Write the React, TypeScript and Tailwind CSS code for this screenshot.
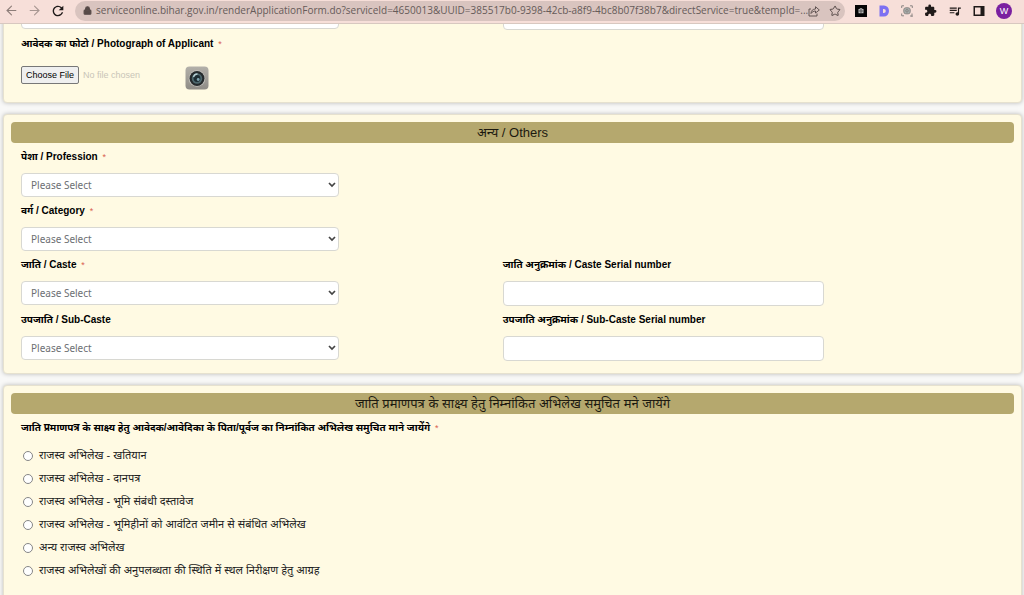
import { useState } from "react";
import type { ReactNode } from "react";
import { ArrowLeft, ArrowRight, Lock, Star } from "lucide-react";
import { MdExtension, MdQueueMusic, MdRefresh } from "react-icons/md";

const EVIDENCE = [
  "राजस्व अभिलेख - खतियान",
  "राजस्व अभिलेख - दानपत्र",
  "राजस्व अभिलेख - भूमि संबंधी दस्तावेज",
  "राजस्व अभिलेख - भूमिहीनों को आवंटित जमीन से संबंधित अभिलेख",
  "अन्य राजस्व अभिलेख",
  "राजस्व अभिलेखों की अनुपलब्धता की स्थिति में स्थल निरीक्षण हेतु आग्रह",
];

const labelClass =
  "block pt-[5px] pb-[7px] text-[10px] leading-[18px] font-bold text-black";
const boxClass =
  "block rounded-sm border border-[#d8d8d2] bg-white text-[#6c6f73]";

function Required() {
  return <span className="ml-[2px] text-[9px] leading-none font-normal text-[#d9604f]">*</span>;
}

function Panel({ title, children }: { title: string; children: ReactNode }) {
  return (
    <section className="rounded-sm border border-[#e6e1cf] bg-[#fffae3] px-[7px] pt-[7px] pb-3 shadow-[0_0_4px_rgba(0,0,0,0.25)]">
      <h2 className="rounded-sm bg-[#b5a86e] text-center text-[13px] leading-[21px] text-[#1c1a10]">
        {title}
      </h2>
      <div className="px-[10px]">{children}</div>
    </section>
  );
}

function Row({ children }: { children: ReactNode }) {
  return <div className="grid grid-cols-[49%_51%]">{children}</div>;
}

function SelectField({
  id,
  label,
  required,
}: {
  id: string;
  label: string;
  required?: boolean;
}) {
  return (
    <div>
      <label htmlFor={id} className={labelClass}>
        {label} {required && <Required />}
      </label>
      <div className="relative w-[66%]">
        <select
          id={id}
          className={`${boxClass} h-6 w-full appearance-none pr-5 pl-[9px] font-['Noto_Sans',sans-serif] text-[10px]`}
        >
          <option>Please Select</option>
        </select>
        <svg
          viewBox="0 0 8 6"
          className="pointer-events-none absolute top-[9px] right-[3px] h-[6px] w-2"
          fill="none"
          stroke="#444"
          strokeWidth="1.7"
        >
          <path d="M1 1l3 3 3-3" />
        </svg>
      </div>
    </div>
  );
}

function TextField({ id, label }: { id: string; label: string }) {
  return (
    <div>
      <label htmlFor={id} className={labelClass}>
        {label}
      </label>
      <input id={id} type="text" className={`${boxClass} h-[25px] w-[64%] px-2 text-[10px]`} />
    </div>
  );
}

function CameraIcon() {
  return (
    <svg viewBox="0 0 24 24" className="size-6">
      <defs>
        <linearGradient id="body" x1="0" y1="0" x2="0" y2="1">
          <stop offset="0" stopColor="#b3b0aa" />
          <stop offset="1" stopColor="#8f8c86" />
        </linearGradient>
      </defs>
      <rect x="0.5" y="0.5" width="23" height="23" rx="4" fill="url(#body)" />
      <circle cx="12" cy="12.5" r="8.3" fill="#c4c3be" />
      <circle cx="12" cy="12.5" r="7.5" fill="#252a2c" />
      <circle cx="12" cy="12.5" r="5.2" fill="#4d676d" />
      <circle cx="12" cy="12.5" r="3.4" fill="#1d2d33" />
      <path d="M8.5 11a4 4 0 0 1 4-3" fill="none" stroke="#b5ced2" strokeWidth="1.3" />
      <circle cx="13.2" cy="13.5" r="1.4" fill="#7fa5b0" />
    </svg>
  );
}

function BrowserBar() {
  const [url, setUrl] = useState(
    "serviceonline.bihar.gov.in/renderApplicationForm.do?serviceId=4650013&UUID=385517b0-9398-42cb-a8f9-4bc8b07f38b7&directService=true&tempId=...",
  );

  return (
    <header className="sticky top-0 z-10 flex h-6 items-center border-b border-[#d8c8c0] bg-[#f7dfd9] pr-3 pb-[2px] pl-1 text-[#1f1a19]">
      <nav className="flex w-[71px] shrink-0 items-center gap-2">
        <button aria-label="Back" className="text-[#8d7d79]">
          <ArrowLeft className="size-[15px]" strokeWidth={1.7} />
        </button>
        <button aria-label="Forward" className="text-[#a89792]">
          <ArrowRight className="size-[15px]" strokeWidth={1.7} />
        </button>
        <button aria-label="Reload">
          <MdRefresh className="size-4" />
        </button>
      </nav>
      <div className="flex h-5 min-w-0 flex-1 items-center rounded-full bg-[#d9c4bf] pr-1 pl-2 text-[#564a48]">
        <Lock className="mr-1 size-[9px] shrink-0" fill="currentColor" strokeWidth={3} />
        <input
          aria-label="Address"
          value={url}
          onChange={(e) => setUrl(e.target.value)}
          className="min-w-0 flex-1 bg-transparent font-['Open_Sans',sans-serif] text-[10px] text-[#665b59] outline-none"
        />
        <div className="flex shrink-0 items-center gap-[9px]">
          <button aria-label="Share">
            <svg viewBox="0 0 12 12" className="size-3" fill="none" stroke="currentColor" strokeWidth="0.9">
              <path d="M3 4H1v7h8V8.5M3 8.5c0-3 2-4.5 4.500-4.500V1.700L11.300 5 7.500 8V6C5.500 6 4 7 3 8.500z" />
            </svg>
          </button>
          <button aria-label="Bookmark">
            <Star className="size-3" />
          </button>
        </div>
      </div>
      <div className="ml-[10px] flex shrink-0 items-center gap-[11px]">
        <button aria-label="Camera extension">
          <svg viewBox="0 0 12 12" className="size-3">
            <path d="M0 0h12v12H0z" fill="#050505" />
            <path d="M3.500 4h1l.5-.7h2l.5.7h1v4.200h-5z" fill="#b9b9b9" />
            <circle cx="6" cy="6" r="1.200" fill="none" stroke="#222" strokeWidth=".7" />
          </svg>
        </button>
        <button aria-label="D extension">
          <svg viewBox="0 0 12 12" className="size-3">
            <path
              d="M1.500 .5h4.500a5 5.500 0 0 1 0 11H1.500zM5 4v4h.8a2 2 0 0 0 0-4z"
              fill="#7d71f2"
              fillRule="evenodd"
            />
          </svg>
        </button>
        <button aria-label="Screenshot extension">
          <svg viewBox="0 0 12 12" className="size-3" fill="none" stroke="#8b8583">
            <path d="M.7 3V.8H3M9 .8h2.300V3M.7 8.500v2.300H3M9 11h2.500M11 8.500V12" />
            <rect x="2.800" y="2.800" width="6.400" height="6" rx="2" fill="#a8b0ae" />
            <circle cx="6" cy="5.800" r="1.300" />
          </svg>
        </button>
        <button aria-label="Extensions">
          <MdExtension className="size-[13px]" />
        </button>
        <button aria-label="Media">
          <MdQueueMusic className="size-[14px]" />
        </button>
        <button aria-label="Side panel">
          <svg viewBox="0 0 12 12" className="size-3">
            <path d="M.5 1h11v10H.5zM2 2.500v7h5.500v-7z" fill="#1f1a19" fillRule="evenodd" />
          </svg>
        </button>
        <button
          aria-label="Profile"
          className="size-4 rounded-full bg-[#7a1fa0] text-center text-[9px] leading-4 text-white"
        >
          W
        </button>
      </div>
    </header>
  );
}

export default function App() {
  const [evidence, setEvidence] = useState("");

  return (
    <div className="h-screen overflow-hidden bg-[#f8f8f7] font-['Liberation_Sans','Noto_Sans',sans-serif]">
      <BrowserBar />
      <main className="-mt-5 flex flex-col gap-[11px] pr-[2px] pl-[3px]">
        <section className="rounded-sm border border-[#e6e1cf] bg-[#fffae3] px-[17px] pb-3 shadow-[0_0_4px_rgba(0,0,0,0.25)]">
          <Row>
            <select
              aria-label="Document type"
              className={`${boxClass} h-6 w-[66%] appearance-none`}
            />
            <input aria-label="Document number" className={`${boxClass} h-[25px] w-[64%]`} />
          </Row>
          <label htmlFor="photo" className={labelClass}>
            आवेदक का फोटो / Photograph of Applicant <Required />
          </label>
          <div className="mt-[6px] flex h-6 items-start">
            <input
              id="photo"
              type="file"
              className="w-41 text-[9px] leading-4 text-[#c9c5b8] file:rounded-xs file:border file:border-solid file:border-[#777] file:bg-[#efefef] file:px-1 file:text-[9px] file:text-black"
            />
            <button aria-label="Take photo">
              <CameraIcon />
            </button>
          </div>
        </section>

        <Panel title="अन्य / Others">
          <Row>
            <SelectField id="profession" label="पेशा / Profession" required />
          </Row>
          <Row>
            <SelectField id="category" label="वर्ग / Category" required />
          </Row>
          <Row>
            <SelectField id="caste" label="जाति / Caste" required />
            <TextField id="caste-serial" label="जाति अनुक्रमांक / Caste Serial number" />
          </Row>
          <Row>
            <SelectField id="sub-caste" label="उपजाति / Sub-Caste" />
            <TextField id="sub-caste-serial" label="उपजाति अनुक्रमांक / Sub-Caste Serial number" />
          </Row>
        </Panel>

        <Panel title="जाति प्रमाणपत्र के साक्ष्य हेतु निम्नांकित अभिलेख समुचित मने जायेंगे">
          <fieldset className="pb-8">
            <legend className={labelClass}>
              जाति प्रमाणपत्र के साक्ष्य हेतु आवेदक/आवेदिका के पिता/पूर्वज का निम्नांकित अभिलेख समुचित माने जायेंगे{" "}
              <Required />
            </legend>
            {EVIDENCE.map((item) => (
              <label
                key={item}
                className="flex h-[23px] items-center gap-[6px] pl-[2px] text-[11px] text-[#222]"
              >
                <input
                  type="radio"
                  name="evidence"
                  checked={evidence === item}
                  onChange={() => setEvidence(item)}
                  className="size-[10px] appearance-none rounded-full border border-[#868686] bg-white checked:border-[3px] checked:border-blue-600"
                />
                {item}
              </label>
            ))}
          </fieldset>
        </Panel>
      </main>
    </div>
  );
}
